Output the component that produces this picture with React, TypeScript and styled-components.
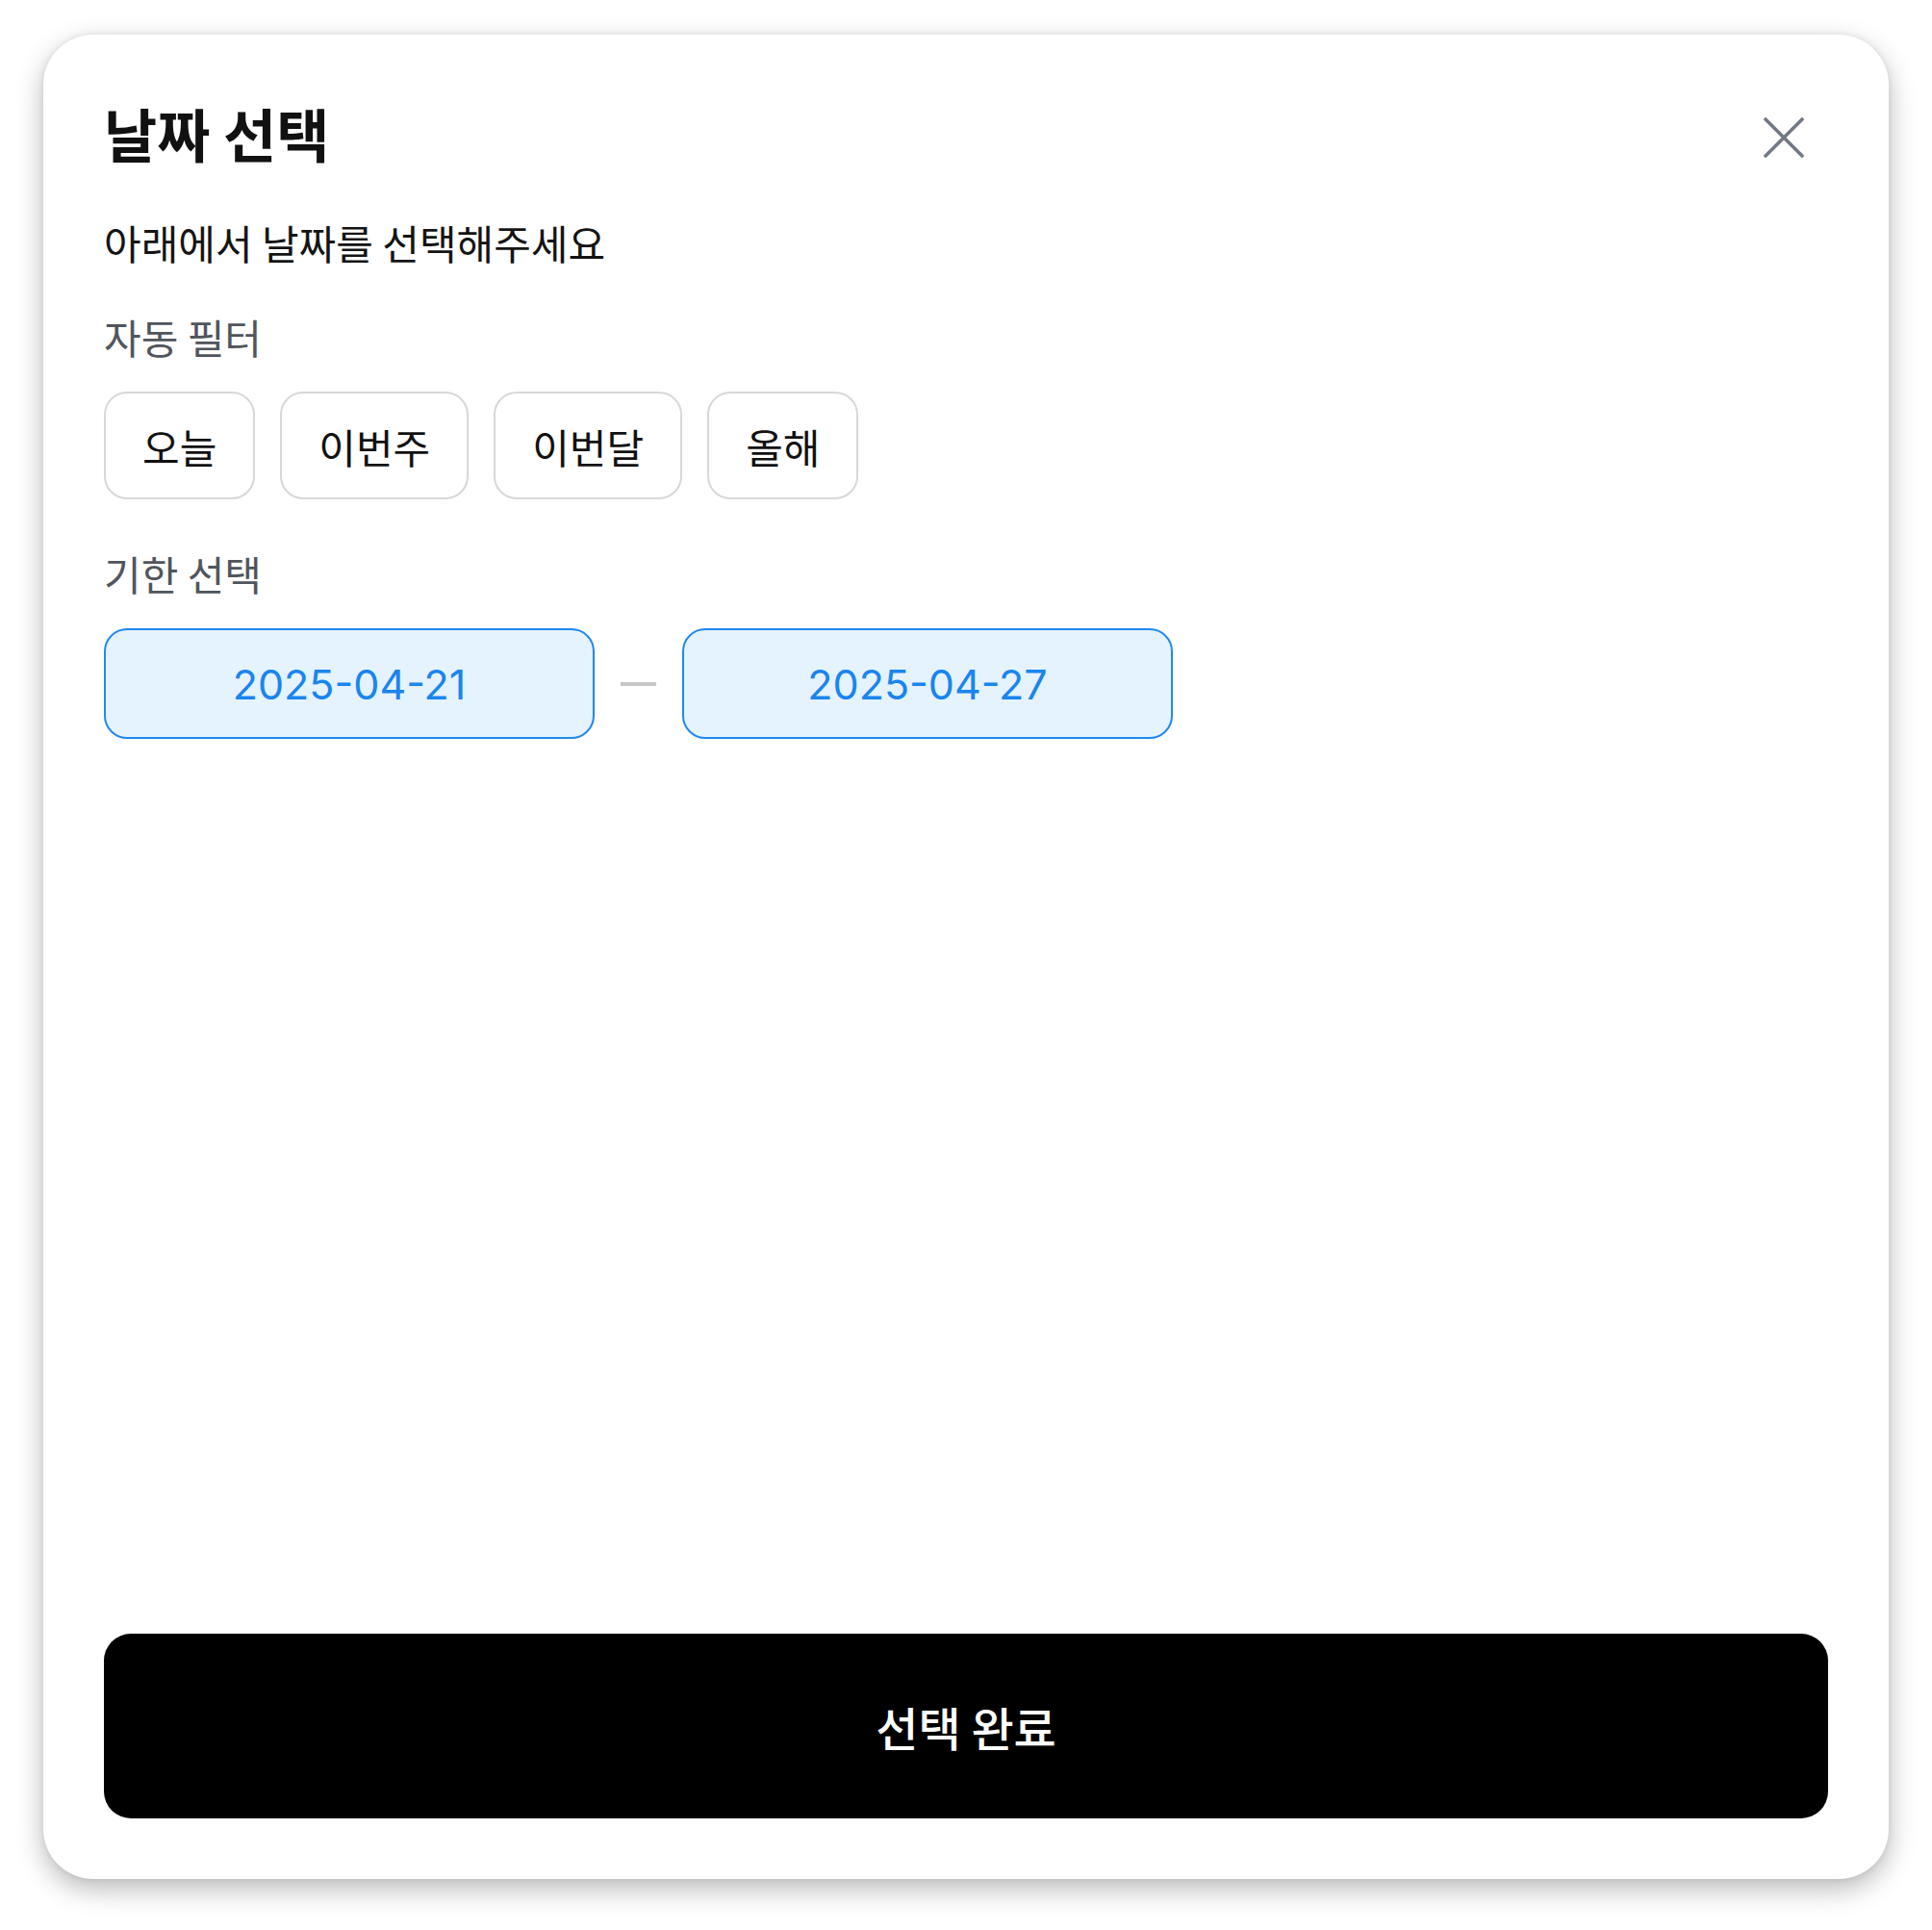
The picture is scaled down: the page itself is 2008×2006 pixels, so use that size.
import React from "react";
import styled, { createGlobalStyle } from "styled-components";

const GlobalStyle = createGlobalStyle`
  html, body {
    margin: 0;
    padding: 0;
    background: #ffffff;
  }
  body {
    font-family: "Noto Sans CJK KR", "Noto Sans", sans-serif;
    -webkit-font-smoothing: antialiased;
  }
  * { box-sizing: border-box; }
`;

const Page = styled.div`
  width: 2008px;
  height: 2006px;
  padding: 36px 45px 0 45px;
  background: #ffffff;
`;

const Dialog = styled.div`
  width: 1918px;
  height: 1917px;
  background: #ffffff;
  border-radius: 52px;
  box-shadow: 0 10px 28px rgba(0, 0, 0, 0.28), 0 0 6px rgba(0, 0, 0, 0.08);
  padding: 64px 63px 63px 63px;
  display: flex;
  flex-direction: column;
`;

const Header = styled.div`
  display: flex;
  justify-content: space-between;
  align-items: flex-start;
`;

const Title = styled.h1`
  margin: 0;
  font-size: 60px;
  line-height: 76px;
  font-weight: 700;
  color: #111111;
`;

const CloseButton = styled.button`
  width: 42px;
  height: 42px;
  margin: 22px 25px 0 0;
  padding: 0;
  border: none;
  background: transparent;
  cursor: pointer;
  display: flex;
  align-items: center;
  justify-content: center;
  color: #727985;
`;

const Description = styled.p`
  margin: 48px 0 0 0;
  font-size: 42px;
  line-height: 56px;
  font-weight: 400;
  color: #141414;
`;

const Section = styled.section<{ $top: number }>`
  margin-top: ${(p) => p.$top}px;
  display: flex;
  flex-direction: column;
  gap: 29px;
`;

const Label = styled.div`
  font-size: 42px;
  line-height: 56px;
  font-weight: 400;
  color: #50555d;
`;

const FilterRow = styled.div`
  display: flex;
  gap: 26px;
`;

const FilterButton = styled.button`
  height: 112px;
  padding: 0 38px;
  border: 2px solid #d7d8da;
  border-radius: 24px;
  background: #ffffff;
  font-family: "Noto Sans CJK KR", sans-serif;
  font-size: 42px;
  font-weight: 400;
  color: #111111;
  display: flex;
  align-items: center;
  justify-content: center;
  cursor: pointer;
`;

const RangeRow = styled.div`
  display: flex;
  align-items: center;
  gap: 27px;
`;

const DateField = styled.div`
  width: 510px;
  height: 115px;
  border: 2px solid #1f89f1;
  border-radius: 24px;
  background: #e5f3ff;
  display: flex;
  align-items: center;
  justify-content: center;
  font-family: Inter, "Noto Sans", sans-serif;
  font-size: 43px;
  font-weight: 400;
  color: #1a85ef;
`;

const Dash = styled.div`
  width: 37px;
  height: 4px;
  background: #c6c7c9;
`;

const Spacer = styled.div`
  flex: 1;
`;

const SubmitButton = styled.button`
  width: 100%;
  height: 192px;
  border: none;
  border-radius: 28px;
  background: #000000;
  color: #ffffff;
  font-family: "Noto Sans CJK KR", sans-serif;
  font-size: 48px;
  font-weight: 500;
  display: flex;
  align-items: center;
  justify-content: center;
  cursor: pointer;
`;

const filters = ["오늘", "이번주", "이번달", "올해"];

export default function App() {
  return (
    <>
      <GlobalStyle />
      <Page>
        <Dialog>
          <Header>
            <Title>날짜 선택</Title>
            <CloseButton aria-label="닫기">
              <svg width="42" height="42" viewBox="0 0 42 42" fill="none">
                <path
                  d="M2 2 L40 40 M40 2 L2 40"
                  stroke="currentColor"
                  strokeWidth="3.6"
                  strokeLinecap="round"
                />
              </svg>
            </CloseButton>
          </Header>
          <Description>아래에서 날짜를 선택해주세요</Description>
          <Section $top={42}>
            <Label>자동 필터</Label>
            <FilterRow>
              {filters.map((f) => (
                <FilterButton key={f}>{f}</FilterButton>
              ))}
            </FilterRow>
          </Section>
          <Section $top={49}>
            <Label>기한 선택</Label>
            <RangeRow>
              <DateField>2025-04-21</DateField>
              <Dash />
              <DateField>2025-04-27</DateField>
            </RangeRow>
          </Section>
          <Spacer />
          <SubmitButton>선택 완료</SubmitButton>
        </Dialog>
      </Page>
    </>
  );
}
